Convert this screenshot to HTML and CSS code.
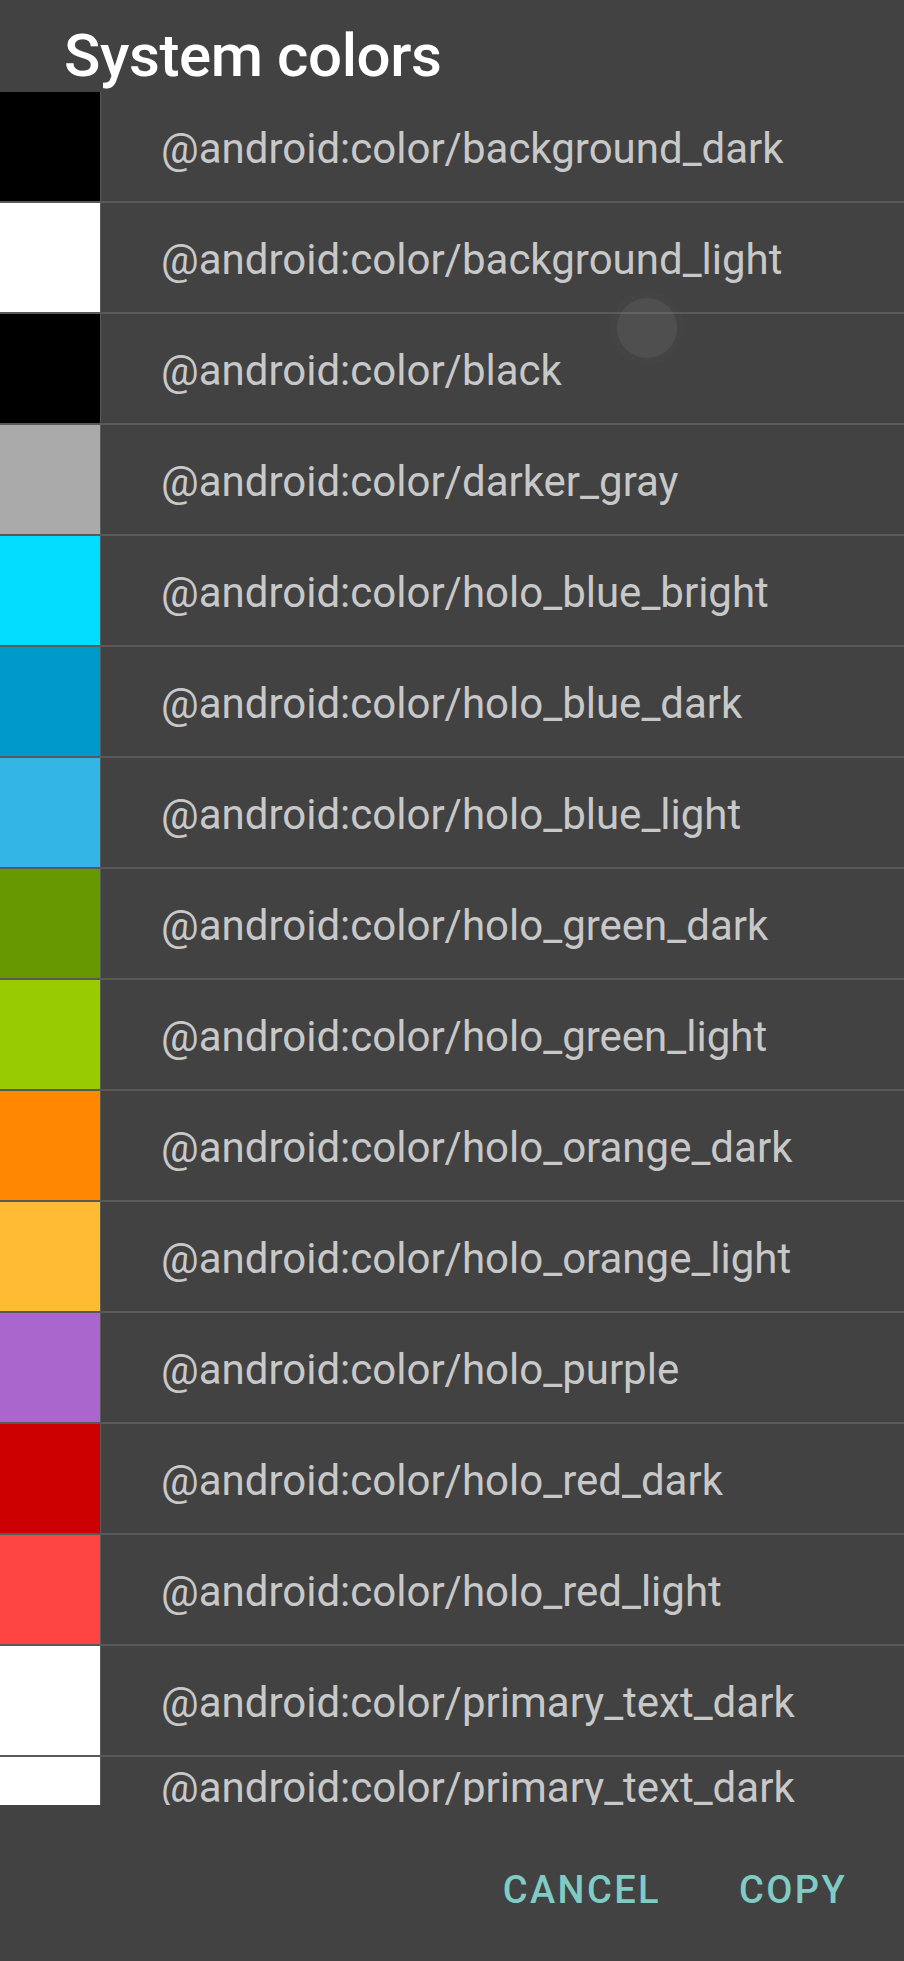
FILE: index.html
```html
<!DOCTYPE html>
<html>
<head>
<meta charset="utf-8">
<link rel="stylesheet" href="styles.css">
</head>
<body>
<div class="dialog">
  <div class="header"><h1 class="title">System colors</h1></div>
  <div class="list">
    <div class="row"><div class="swatch" style="background:#000000"></div><div class="label">@android:color/background_dark</div></div>
    <div class="row"><div class="swatch" style="background:#ffffff"></div><div class="label">@android:color/background_light</div></div>
    <div class="row"><div class="swatch" style="background:#000000"></div><div class="label">@android:color/black</div></div>
    <div class="row"><div class="swatch" style="background:#aaaaaa"></div><div class="label">@android:color/darker_gray</div></div>
    <div class="row"><div class="swatch" style="background:#00ddff"></div><div class="label">@android:color/holo_blue_bright</div></div>
    <div class="row"><div class="swatch" style="background:#0099cc"></div><div class="label">@android:color/holo_blue_dark</div></div>
    <div class="row"><div class="swatch" style="background:#33b5e5"></div><div class="label">@android:color/holo_blue_light</div></div>
    <div class="row"><div class="swatch" style="background:#669900"></div><div class="label">@android:color/holo_green_dark</div></div>
    <div class="row"><div class="swatch" style="background:#99cc00"></div><div class="label">@android:color/holo_green_light</div></div>
    <div class="row"><div class="swatch" style="background:#ff8800"></div><div class="label">@android:color/holo_orange_dark</div></div>
    <div class="row"><div class="swatch" style="background:#ffbb33"></div><div class="label">@android:color/holo_orange_light</div></div>
    <div class="row"><div class="swatch" style="background:#aa66cc"></div><div class="label">@android:color/holo_purple</div></div>
    <div class="row"><div class="swatch" style="background:#cc0000"></div><div class="label">@android:color/holo_red_dark</div></div>
    <div class="row"><div class="swatch" style="background:#ff4444"></div><div class="label">@android:color/holo_red_light</div></div>
    <div class="row"><div class="swatch" style="background:#ffffff"></div><div class="label">@android:color/primary_text_dark</div></div>
    <div class="row row-partial"><div class="swatch" style="background:#ffffff"></div><div class="label">@android:color/primary_text_dark</div></div>
    <div class="ripple"></div>
  </div>
  <div class="footer">
    <span class="btn">CANCEL</span>
    <span class="btn">COPY</span>
  </div>
</div>
</body>
</html>
```
FILE: styles.css
```css
html, body {
  margin: 0;
  padding: 0;
  background: #424242;
}
.dialog {
  width: 904px;
  height: 1961px;
  display: flex;
  flex-direction: column;
  font-family: Roboto, "Noto Sans", sans-serif;
  background: #424242;
}
.header {
  height: 92px;
  padding-left: 64px;
  box-sizing: border-box;
}
.title {
  margin: 0;
  padding-top: 21px;
  font-size: 60px;
  font-weight: 500;
  line-height: 70px;
  letter-spacing: -0.4px;
  color: #ffffff;
  white-space: nowrap;
}
.list {
  position: relative;
  height: 1713px;
  overflow: hidden;
}
.row {
  display: flex;
  align-items: stretch;
  height: 109px;
  border-bottom: 2px solid #595959;
}
.swatch {
  width: 100px;
  flex: none;
  border-right: 1px solid #5a5a5a;
}
.label {
  padding-left: 60px;
  padding-top: 4px;
  font-size: 42px;
  line-height: 105px;
  color: #c8c8c8;
  white-space: nowrap;
}
.row-partial .label {
  padding-top: 0;
  margin-top: -22px;
}
.ripple {
  position: absolute;
  left: 617px;
  top: 206px;
  width: 60px;
  height: 60px;
  border-radius: 50%;
  background: rgba(255, 255, 255, 0.07);
  box-shadow: 0 0 10px 6px rgba(255, 255, 255, 0.025);
}
.footer {
  flex: 1;
  display: flex;
  justify-content: flex-end;
  align-items: flex-start;
  gap: 78px;
  padding-right: 57px;
  padding-top: 60px;
}
.btn {
  font-size: 38px;
  font-weight: 500;
  line-height: 50px;
  letter-spacing: 2.4px;
  color: #80cbc4;
}
```
